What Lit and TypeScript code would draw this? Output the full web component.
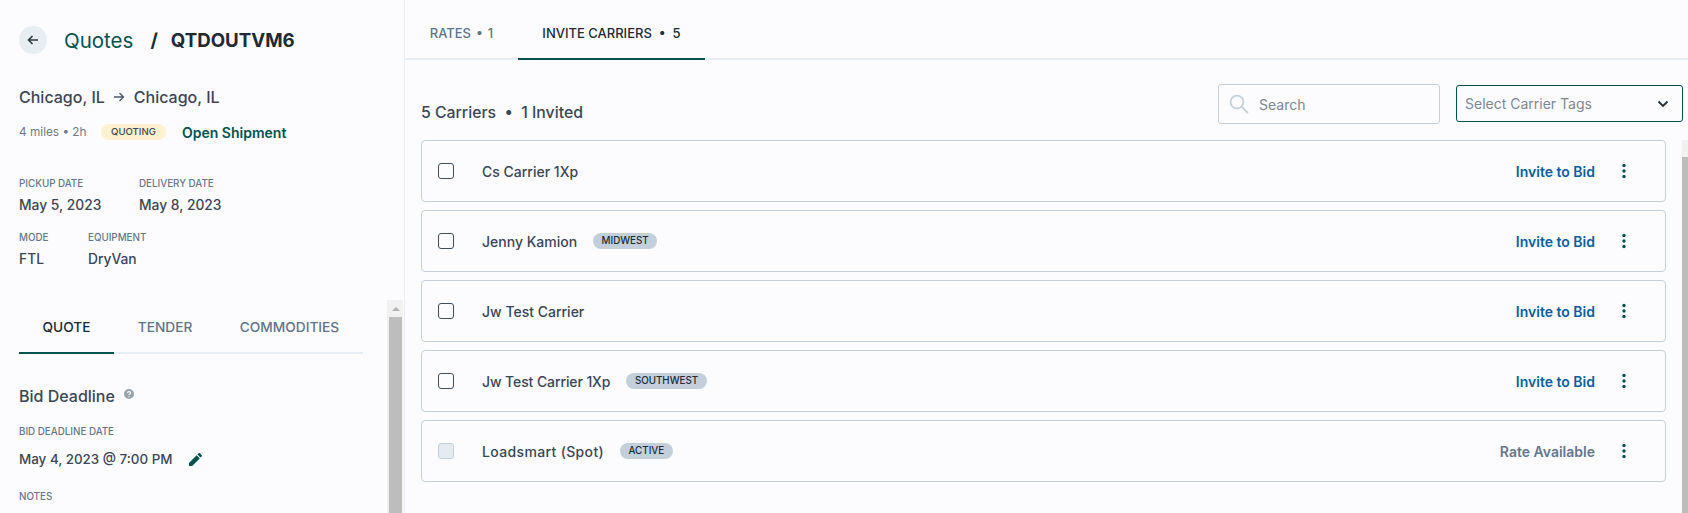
import { LitElement, html, css, svg } from "lit";
import { customElement } from "lit/decorators.js";

type Carrier = { name: string; tag?: string; disabled?: boolean; spacing?: number };
const carriers: Carrier[] = [
  { name: "Cs Carrier 1Xp" },
  { name: "Jenny Kamion", tag: "MIDWEST" },
  { name: "Jw Test Carrier" },
  { name: "Jw Test Carrier 1Xp", tag: "SOUTHWEST", spacing: -0.1 },
  { name: "Loadsmart (Spot)", tag: "ACTIVE", disabled: true, spacing: 0.35 },
];

const dots = svg`<svg width="4" height="16" viewBox="0 0 4 16" fill="#00524f"><circle cx="2" cy="2.5" r="1.7"/><circle cx="2" cy="8" r="1.7"/><circle cx="2" cy="13.5" r="1.7"/></svg>`;

@customElement("app-root")
export class AppRoot extends LitElement {
  static styles = css`
    :host { display: block; height: 513px; overflow: hidden; background: #fcfcff; color: #3a4656; font-family: Inter, "Liberation Sans", sans-serif; }
    .page { display: flex; height: 513px; }
    .side { position: relative; box-sizing: border-box; width: 405px; flex: none; border-right: 1px solid #e8edf3; padding: 26px 0 0 19px; overflow: hidden; }
    .crumbs { display: flex; align-items: center; height: 28px; font-size: 20.5px; line-height: 28px; }
    .back { width: 28px; height: 28px; border-radius: 50%; background: #e6edf3; display: flex; align-items: center; justify-content: center; margin-right: 17px; }
    .quotes { color: #00524f; font-weight: 400; margin-top: 2px; }
    .slash { color: #202a36; font-weight: 700; margin: 2px 13px 0 17px; font-size: 19px; }
    .qid { color: #202a36; font-weight: 700; font-size: 18.7px; margin-top: 2px; }
    .route { display: flex; align-items: center; margin-top: 29px; height: 28px; font-size: 16px; font-weight: 500; color: #3a4656; }
    .route svg { margin: 0 8.5px; }
    .meta { display: flex; align-items: center; margin-top: 11px; height: 20px; }
    .miles { font-size: 11.8px; color: #6c7a88; width: 82px; }
    .status { box-sizing: border-box; width: 65px; height: 16px; border-radius: 8px; background: #fff1cf; color: #3a4656; font-size: 9.6px; font-weight: 500; line-height: 16px; text-align: center; }
    .open { margin-left: 16px; color: #00524f; font-size: 14px; font-weight: 600; }
    .facts { display: flex; margin-top: 35px; }
    .facts + .facts { margin-top: 16px; }
    .fact { display: flex; flex-direction: column; }
    .label { font-size: 9.8px; line-height: 14px; font-weight: 500; color: #64778c; }
    .value { font-size: 13.8px; line-height: 20px; font-weight: 500; color: #3a4656; margin-top: 4px; }
    .w120 { width: 120px; }
    .w69 { width: 69px; }
    .tabs { display: flex; width: 344px; margin-top: 42px; height: 43px; box-sizing: border-box; border-bottom: 2px solid #e8edf3; }
    .tab { box-sizing: border-box; height: 43px; font-size: 13.7px; line-height: 32px; font-weight: 500; color: #5f7488; text-align: center; }
    .tab.on { color: #202a36; border-bottom: 2px solid #00524f; }
    .t1 { width: 95px; }
    .t2 { width: 102px; }
    .t3 { width: 147px; }
    .bid { display: flex; align-items: center; margin-top: 30px; height: 24px; font-size: 16px; font-weight: 500; color: #3a4656; }
    .bid svg { margin: -4px 0 0 9px; }
    .lbl2 { margin-top: 17px; }
    .when { display: flex; align-items: center; margin-top: 10px; height: 20px; font-size: 13.4px; font-weight: 500; }
    .when svg { margin-left: 17px; }
    .notes { margin-top: 21px; }
    .bar { position: absolute; background: #f1f1f1; }
    .bar i { display: block; background: #bdbdbd; }
    .sb1 { right: 1px; top: 300px; bottom: 0; width: 16px; }
    .sb1 i { margin: 17px 1px 0 2px; height: 200px; }
    .sb1 b { position: absolute; left: 5px; top: 7px; border: 4px solid transparent; border-top: 0; border-bottom: 4px solid #b0b0b0; }
    .sb2 { right: 0; top: 140px; bottom: 0; width: 6px; }
    .sb2 i { margin-top: 17px; height: 360px; }
    .main { flex: 1; min-width: 0; display: flex; flex-direction: column; }
    .mtabs { display: flex; height: 60px; box-sizing: border-box; border-bottom: 2px solid #e8edf3; }
    .mtab { box-sizing: border-box; height: 60px; line-height: 66px; font-size: 13px; font-weight: 500; color: #5f7488; text-align: center; white-space: pre; }
    .mt1 { width: 113px; word-spacing: -1px; }
    .mt2 { width: 187px; color: #202a36; border-bottom: 2px solid #00524f; }
    .toolbar { display: flex; align-items: flex-start; padding: 24px 5px 0 16px; height: 80px; box-sizing: border-box; }
    .count { flex: 1; font-size: 15.8px; font-weight: 500; color: #3a4656; margin-top: 19px; line-height: 20px; white-space: pre; }
    .search { box-sizing: border-box; display: flex; align-items: center; width: 222px; height: 40px; border: 1px solid #c3d0dc; border-radius: 3px; padding-left: 10px; font-size: 14px; color: #7c8893; }
    .search svg { margin-right: 10px; }
    .select { box-sizing: border-box; display: flex; align-items: center; justify-content: space-between; width: 227px; height: 37px; margin: 1px 0 0 16px; border: 1px solid #00524f; border-radius: 3px; padding: 0 13px 0 8px; font-size: 14px; color: #7c8893; }
    .rows { display: flex; flex-direction: column; gap: 8px; margin: 0 22px 0 16px; }
    .row { box-sizing: border-box; display: flex; align-items: center; height: 62px; border: 1px solid #c3d0dc; border-radius: 4px; padding-left: 16px; }
    .box { box-sizing: border-box; width: 16px; height: 16px; border: 1px solid #3f4d5c; border-radius: 3px; margin-right: 28px; }
    .box.off { background: #e6ebf2; border-color: #c3d0dc; }
    .name { font-size: 14px; font-weight: 500; color: #3a4656; }
    .tag { height: 16px; border-radius: 8px; background: #c3d0dc; color: #202a36; font-size: 9.8px; font-weight: 500; line-height: 16px; padding: 0 8.5px; margin-left: 16px; }
    .act { margin-left: auto; font-size: 14px; font-weight: 600; color: #0a5f9e; }
    .act.off { color: #64778c; }
    .dots { display: flex; margin: 0 39px 0 27px; }
  `;

  render() {
    return html`<div class="page">
      <aside class="side">
        <div class="crumbs">
          <span class="back"><svg width="14" height="14" viewBox="0 0 14 14" fill="none" stroke="#2d3946" stroke-width="1.6"><path d="M12 7H2.5M6.5 3 2.5 7l4 4"/></svg></span>
          <span class="quotes">Quotes</span><span class="slash">/</span><span class="qid">QTDOUTVM6</span>
        </div>
        <div class="route">Chicago, IL<svg width="12" height="12" viewBox="0 0 12 12" fill="none" stroke="#4b5866" stroke-width="1.3"><path d="M1 6h9.5M6.5 2l4 4-4 4"/></svg>Chicago, IL</div>
        <div class="meta"><span class="miles">4 miles • 2h</span><span class="status">QUOTING</span><span class="open">Open Shipment</span></div>
        <div class="facts">
          <div class="fact w120"><span class="label">PICKUP DATE</span><span class="value">May 5, 2023</span></div>
          <div class="fact"><span class="label">DELIVERY DATE</span><span class="value">May 8, 2023</span></div>
        </div>
        <div class="facts">
          <div class="fact w69"><span class="label">MODE</span><span class="value">FTL</span></div>
          <div class="fact"><span class="label">EQUIPMENT</span><span class="value">DryVan</span></div>
        </div>
        <div class="tabs">
          <div class="tab on t1">QUOTE</div><div class="tab t2">TENDER</div><div class="tab t3">COMMODITIES</div>
        </div>
        <div class="bid">Bid Deadline<svg width="10" height="10" viewBox="0 0 10 10"><circle cx="5" cy="5" r="5" fill="#9aa3ab"/><path d="M3.4 3.9C3.5 2.2 6.6 2.2 6.6 3.9 6.6 5 5 4.9 5 6" fill="none" stroke="#fcfcff" stroke-width="1.1"/><circle cx="5" cy="7.6" r=".7" fill="#fcfcff"/></svg></div>
        <div class="label lbl2">BID DEADLINE DATE</div>
        <div class="when">May 4, 2023 @ 7:00 PM<svg width="13" height="13" viewBox="0 0 13 13" fill="#00524f"><path d="M0 13V9.9L7.6 2.3l3.1 3.1L3.1 13ZM8.4 1.5 9.5.4c.5-.5 1.1-.5 1.6 0l1.5 1.5c.5.5.5 1.1 0 1.6L11.5 4.6Z"/></svg></div>
        <div class="label notes">NOTES</div>
        <div class="bar sb1"><b></b><i></i></div>
      </aside>
      <main class="main">
        <div class="mtabs"><div class="mtab mt1">RATES  •  1</div><div class="mtab mt2">INVITE CARRIERS  •  5</div></div>
        <div class="toolbar">
          <div class="count">5 Carriers  •  1 Invited</div>
          <div class="search"><svg width="20" height="20" viewBox="0 0 20 20" fill="none" stroke="#c3d0dc" stroke-width="1.8"><circle cx="8" cy="8" r="6.4"/><path d="m12.6 12.6 6.4 6.4"/></svg>Search</div>
          <div class="select">Select Carrier Tags<svg width="12" height="8" viewBox="0 0 12 8" fill="none" stroke="#202a36" stroke-width="1.8"><path d="m1.5 1.5 4.5 4.5 4.5-4.5"/></svg></div>
        </div>
        <div class="rows">
          ${carriers.map(
            (c) => html`<div class="row">
              <span class="box ${c.disabled ? "off" : ""}"></span>
              <span class="name" style="letter-spacing:${c.spacing ?? 0}px">${c.name}</span>
              ${c.tag ? html`<span class="tag">${c.tag}</span>` : ""}
              <span class="act ${c.disabled ? "off" : ""}">${c.disabled ? "Rate Available" : "Invite to Bid"}</span>
              <span class="dots">${dots}</span>
            </div>`
          )}
        </div>
      </main>
      <div class="bar sb2"><i></i></div>
    </div>`;
  }
}
